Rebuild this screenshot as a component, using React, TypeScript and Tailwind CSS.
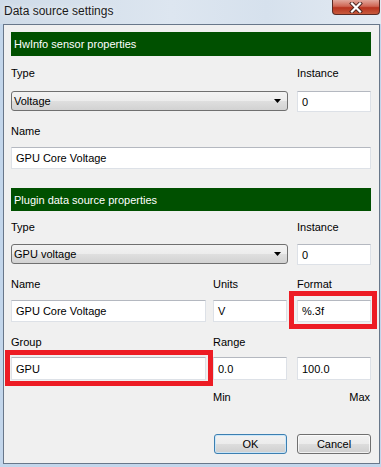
import React from 'react';

const TextBox: React.FC<{ value: string; className?: string }> = ({ value, className = '' }) => (
    <div className={`bg-white border border-[#dde1e7] border-t-[#b4b8c0] pl-[4px] flex items-center ${className}`}>
        {value}
    </div>
);

const Combo: React.FC<{ value: string }> = ({ value }) => (
    <div className="w-[277px] h-[20px] rounded-[3px] border border-[#707070] bg-[linear-gradient(to_bottom,#f3f3f3_0%,#ececec_50%,#dfdfdf_50%,#d2d2d2_100%)] flex items-center pl-[2px] pr-[5px]">
        <span>{value}</span>
        <svg className="ml-auto" width="8" height="5" viewBox="0 0 8 5">
            <path d="M0 0h7L3.5 4z" fill="#000" />
        </svg>
    </div>
);

const SectionHeader: React.FC<{ title: string; className?: string }> = ({ title, className = '' }) => (
    <div className={`w-[360px] bg-[#005000] text-white flex items-center pl-[3px] ${className}`}>{title}</div>
);

const Highlight: React.FC<{ className: string }> = ({ className }) => (
    <div className={`absolute border-[5px] border-[#ed1c24] pointer-events-none ${className}`}></div>
);

export default function App() {
    return (
        <div className="w-[381px] h-[467px] overflow-hidden bg-[#c3d6eb] font-['Liberation_Sans',Arial,sans-serif] text-[11px] leading-[14px] text-black">
            {/* title bar */}
            <div className="h-[24px] flex items-start bg-[linear-gradient(to_right,#cfdbe8,#dde6f0_45%,#d6e1ed_70%,#e3eaf2)]">
                <span className="pl-[4px] pt-[3px] text-[12px] leading-[16px] text-[#1a1a1a] [text-shadow:0_0_6px_rgba(255,255,255,0.95)]">
                    Data source settings
                </span>
                <div className="ml-auto mr-[1px] w-[48px] h-[15px] rounded-b-[4px] border border-t-0 border-[#5b2a24] bg-[linear-gradient(to_bottom,#e2a79c,#cf6654_45%,#b8331f_55%,#c75a3c)] flex items-center justify-center">
                    <svg width="14" height="11" viewBox="0 0 14 11">
                        <path d="M3 1.5l8 8M11 1.5l-8 8" stroke="#4a2520" strokeWidth="4" strokeLinecap="square" />
                        <path d="M3 1.5l8 8M11 1.5l-8 8" stroke="#ffffff" strokeWidth="2.2" strokeLinecap="square" />
                    </svg>
                </div>
            </div>

            {/* client area */}
            <div className="ml-[3px] w-[377px] h-[440px] border border-[#68778a] bg-[#f0f0f0] pl-[7px] flex flex-col">
                <SectionHeader title="HwInfo sensor properties" className="mt-[7px] h-[24px]" />

                <div className="mt-[10px] flex">
                    <span className="w-[286px]">Type</span>
                    <span>Instance</span>
                </div>
                <div className="mt-[11px] flex items-start">
                    <Combo value="Voltage" />
                    <TextBox value="0" className="ml-[9px] w-[74px] h-[21px]" />
                </div>

                <div className="mt-[12px]">Name</div>
                <TextBox value="GPU Core Voltage" className="mt-[9px] w-[360px] h-[22px]" />

                <SectionHeader title="Plugin data source properties" className="mt-[19px] h-[23px]" />

                <div className="mt-[9px] flex">
                    <span className="w-[286px]">Type</span>
                    <span>Instance</span>
                </div>
                <div className="mt-[10px] flex items-start">
                    <Combo value="GPU voltage" />
                    <TextBox value="0" className="ml-[9px] w-[74px] h-[21px]" />
                </div>

                <div className="mt-[12px] flex">
                    <span className="w-[202px]">Name</span>
                    <span className="w-[84px]">Units</span>
                    <span>Format</span>
                </div>
                <div className="mt-[9px] flex">
                    <TextBox value="GPU Core Voltage" className="w-[195px] h-[22px]" />
                    <TextBox value="V" className="ml-[7px] w-[74px] h-[22px]" />
                    <div className="relative ml-[10px]">
                        <TextBox value="%.3f" className="w-[74px] h-[22px]" />
                        <Highlight className="left-[-8px] right-[-6px] top-[-9px] bottom-[-7px]" />
                    </div>
                </div>

                <div className="mt-[13px] flex">
                    <span className="w-[202px]">Group</span>
                    <span>Range</span>
                </div>
                <div className="mt-[8px] flex">
                    <div className="relative">
                        <TextBox value="GPU" className="w-[195px] h-[23px]" />
                        <Highlight className="left-[-6px] right-[-7px] top-[-7px] bottom-[-6px]" />
                    </div>
                    <TextBox value="0.0" className="ml-[7px] w-[74px] h-[23px]" />
                    <TextBox value="100.0" className="ml-[10px] w-[74px] h-[23px]" />
                </div>

                <div className="mt-[10px] w-[360px] flex">
                    <span className="ml-[202px]">Min</span>
                    <span className="ml-auto mr-[1px]">Max</span>
                </div>

                <div className="mt-[30px] flex">
                    <button className="ml-[203px] w-[73px] h-[20px] rounded-[3px] border border-[#3c7fb1] bg-[linear-gradient(to_bottom,#f2f2f2_0%,#ebebeb_50%,#dddddd_50%,#cfcfcf_100%)] shadow-[inset_0_0_0_1px_rgba(200,230,250,0.9)] leading-[14px]">
                        OK
                    </button>
                    <button className="ml-[10px] w-[74px] h-[20px] rounded-[3px] border border-[#707070] bg-[linear-gradient(to_bottom,#f2f2f2_0%,#ebebeb_50%,#dddddd_50%,#cfcfcf_100%)] shadow-[inset_0_0_0_1px_rgba(255,255,255,0.7)] leading-[14px]">
                        Cancel
                    </button>
                </div>
            </div>
        </div>
    );
}
